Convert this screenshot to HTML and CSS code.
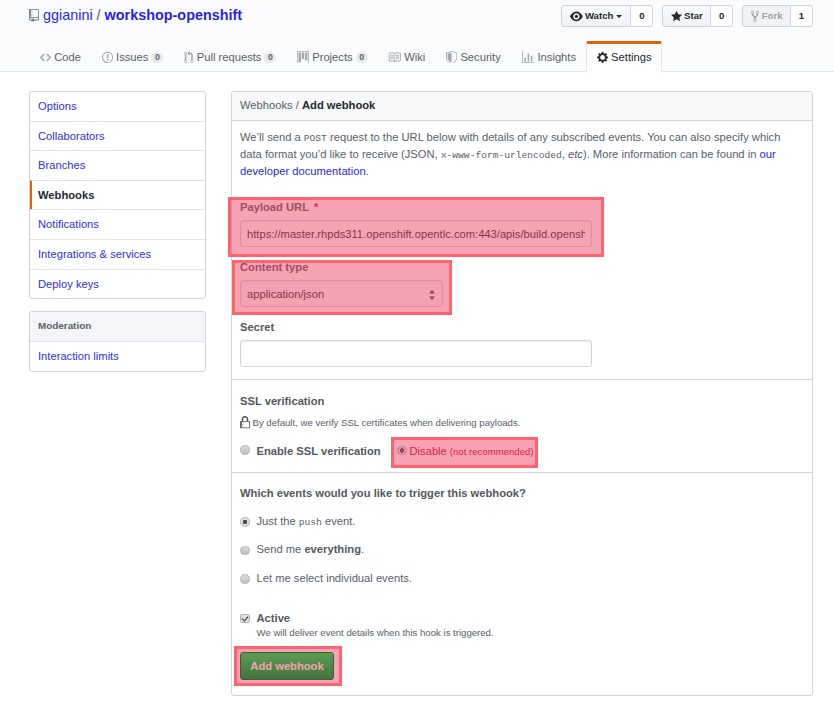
FILE: index.html
```html
<!DOCTYPE html>
<html lang="en">
<head>
<meta charset="utf-8">
<title>Add webhook</title>
<link rel="stylesheet" href="styles.css">
</head>
<body>
<header class="repohead">
  <div class="repohead-top">
    <h1 class="repo-title">
      <svg class="ico repo-ico" viewBox="0 0 12 16"><path d="M4 9H3V8h1v1zm0-3H3v1h1V6zm0-2H3v1h1V4zm0-2H3v1h1V2zm8-1v12c0 .55-.45 1-1 1H6v2l-1.5-1.5L3 16v-2H1c-.55 0-1-.45-1-1V1c0-.55.45-1 1-1h10c.55 0 1 .45 1 1zm-1 10H1v2h2v-1h3v1h5v-2zm0-10H2v9h9V1z"/></svg>
      <a class="owner" href="#">ggianini</a><span class="sep">/</span><a class="name" href="#">workshop-openshift</a>
    </h1>
    <div class="actions">
      <div class="btn-pair">
        <span class="btn-act btn-watch"><svg class="ico act-ico" viewBox="0 0 16 16"><path d="M8.06 2C3 2 0 8 0 8s3 6 8.06 6C13 14 16 8 16 8s-3-6-7.94-6zM8 12c-2.2 0-4-1.78-4-4 0-2.2 1.8-4 4-4 2.22 0 4 1.8 4 4 0 2.22-1.78 4-4 4zm2-4c0 1.11-.89 2-2 2-1.11 0-2-.89-2-2 0-1.11.89-2 2-2 1.11 0 2 .89 2 2z"/></svg>Watch<i class="caret"></i></span><span class="btn-count">0</span>
      </div>
      <div class="btn-pair">
        <span class="btn-act"><svg class="ico star-ico" viewBox="0 0 14 16"><path d="M14 6l-4.9-.64L7 1 4.9 5.36 0 6l3.6 3.26L2.67 14 7 11.67 11.33 14l-.93-4.74L14 6z"/></svg>Star</span><span class="btn-count">0</span>
      </div>
      <div class="btn-pair">
        <span class="btn-act is-disabled"><svg class="ico fork-ico" viewBox="0 0 10 16"><path d="M8 1a1.993 1.993 0 0 0-1 3.72V6L5 8 3 6V4.72A1.993 1.993 0 0 0 2 1a1.993 1.993 0 0 0-1 3.72V6.5l3 3v1.78A1.993 1.993 0 0 0 5 15a1.993 1.993 0 0 0 1-3.72V9.5l3-3V4.72A1.993 1.993 0 0 0 8 1zM2 4.2C1.34 4.2.8 3.65.8 3c0-.65.55-1.2 1.2-1.2.65 0 1.2.55 1.2 1.2 0 .65-.55 1.2-1.2 1.2zm3 10c-.66 0-1.2-.55-1.2-1.2 0-.65.55-1.2 1.2-1.2.65 0 1.2.55 1.2 1.2 0 .65-.55 1.2-1.2 1.2zm3-10c-.66 0-1.2-.55-1.2-1.2 0-.65.55-1.2 1.2-1.2.65 0 1.2.55 1.2 1.2 0 .65-.55 1.2-1.2 1.2z"/></svg>Fork</span><span class="btn-count">1</span>
      </div>
    </div>
  </div>
  <nav class="tabs">
    <a class="tab" href="#"><svg class="ico tab-ico" viewBox="0 0 14 16"><path d="M9.5 3L8 4.5 11.5 8 8 11.5 9.5 13 14 8 9.5 3zm-5 0L0 8l4.5 5L6 11.5 2.5 8 6 4.5 4.5 3z"/></svg>Code</a>
    <a class="tab" href="#"><svg class="ico tab-ico" viewBox="0 0 14 16"><path d="M7 2.3c3.14 0 5.7 2.56 5.7 5.7s-2.56 5.7-5.7 5.7A5.71 5.71 0 0 1 1.3 8c0-3.14 2.56-5.7 5.7-5.7zM7 1C3.14 1 0 4.14 0 8s3.14 7 7 7 7-3.14 7-7-3.14-7-7-7zm1 3H6v5h2V4zm0 6H6v2h2v-2z"/></svg>Issues<span class="counter">0</span></a>
    <a class="tab" href="#"><svg class="ico tab-ico" viewBox="0 0 12 16"><path d="M11 11.28V5c-.03-.78-.34-1.47-.94-2.06C9.46 2.35 8.78 2.03 8 2H7V0L4 3l3 3V4h1c.27.02.48.11.69.31.21.2.3.42.31.69v6.28A1.993 1.993 0 0 0 10 15a1.993 1.993 0 0 0 1-3.72zm-1 2.92c-.66 0-1.2-.55-1.2-1.2 0-.65.55-1.2 1.2-1.2.65 0 1.2.55 1.2 1.2 0 .65-.55 1.2-1.2 1.2zM4 3c0-1.11-.89-2-2-2a1.993 1.993 0 0 0-1 3.72v6.56A1.993 1.993 0 0 0 2 15a1.993 1.993 0 0 0 1-3.72V4.72c.59-.34 1-.98 1-1.72zm-.8 10c0 .66-.55 1.2-1.2 1.2-.65 0-1.2-.55-1.2-1.2 0-.65.55-1.2 1.2-1.2.65 0 1.2.55 1.2 1.2zM2 4.2C1.34 4.2.8 3.65.8 3c0-.65.55-1.2 1.2-1.2.65 0 1.2.55 1.2 1.2 0 .65-.55 1.2-1.2 1.2z"/></svg>Pull requests<span class="counter">0</span></a>
    <a class="tab" href="#"><svg class="ico tab-ico" viewBox="0 0 15 16"><path d="M10 12h3V2h-3v10zm-4-2h3V2H6v8zm-4 4h3V2H2v12zm-1 1h13V1H1v14zM14 0H1a1 1 0 0 0-1 1v14a1 1 0 0 0 1 1h13a1 1 0 0 0 1-1V1a1 1 0 0 0-1-1z"/></svg>Projects<span class="counter">0</span></a>
    <a class="tab" href="#"><svg class="ico tab-ico" viewBox="0 0 16 16"><path d="M3 5h4v1H3V5zm0 3h4V7H3v1zm0 2h4V9H3v1zm11-5h-4v1h4V5zm0 2h-4v1h4V7zm0 2h-4v1h4V9zm2-6v9c0 .55-.45 1-1 1H9.5l-1 1-1-1H2c-.55 0-1-.45-1-1V3c0-.55.45-1 1-1h5.5l1 1 1-1H15c.55 0 1 .45 1 1zm-8 .5L7.5 3H2v9h6V3.5zm7-.5H9.5l-.5.5V12h6V3z"/></svg>Wiki</a>
    <a class="tab" href="#"><svg class="ico tab-ico" viewBox="0 0 14 16"><path d="M0 2l7-2 7 2v6.02C14 12.69 8.69 16 7 16c-1.69 0-7-3.31-7-7.98V2zm1 .75L7 1l6 1.75v5.268C13 12.104 8.449 15 7 15c-1.449 0-6-2.896-6-6.982V2.75zm1 .75L7 2v12c-1.207 0-5-2.482-5-5.985V3.5z"/></svg>Security</a>
    <a class="tab" href="#"><svg class="ico tab-ico" viewBox="0 0 16 16"><path d="M16 14v1H0V0h1v14h15zM5 13H3V8h2v5zm4 0H7V3h2v10zm4 0h-2V6h2v7z"/></svg>Insights</a>
    <a class="tab is-selected" href="#"><svg class="ico tab-ico" viewBox="0 0 14 16"><path d="M14 8.77v-1.6l-1.94-.64-.45-1.09.88-1.84-1.13-1.13-1.81.91-1.09-.45-.69-1.92h-1.6l-.63 1.94-1.11.45-1.84-.88-1.13 1.13.91 1.81-.45 1.09L0 7.23v1.59l1.94.64.45 1.09-.88 1.84 1.13 1.13 1.81-.91 1.09.45.69 1.92h1.59l.63-1.94 1.11-.45 1.84.88 1.13-1.13-.92-1.81.47-1.09L14 8.75v.02zM7 11c-1.66 0-3-1.34-3-3s1.34-3 3-3 3 1.34 3 3-1.34 3-3 3z"/></svg>Settings</a>
  </nav>
</header>

<div class="page">
  <aside class="sidebar">
    <nav class="menu">
      <a class="menu-item" href="#">Options</a>
      <a class="menu-item" href="#">Collaborators</a>
      <a class="menu-item" href="#">Branches</a>
      <a class="menu-item is-current" href="#">Webhooks</a>
      <a class="menu-item" href="#">Notifications</a>
      <a class="menu-item" href="#">Integrations &amp; services</a>
      <a class="menu-item" href="#">Deploy keys</a>
    </nav>
    <nav class="menu">
      <div class="menu-heading">Moderation</div>
      <a class="menu-item" href="#">Interaction limits</a>
    </nav>
  </aside>

  <main class="panel">
    <div class="panel-head"><span class="crumb">Webhooks /</span> <strong>Add webhook</strong></div>
    <div class="panel-body">
      <p class="intro">We’ll send a <code>POST</code> request to the URL below with details of any subscribed events. You can also specify which data format you’d like to receive (JSON, <code>x-www-form-urlencoded</code>, <em>etc</em>). More information can be found in <a href="#">our developer documentation</a>.</p>

      <div class="field field-url">
        <label class="label">Payload URL <span class="req">*</span></label>
        <input class="input input-wide" type="text" value="https://master.rhpds311.openshift.opentlc.com:443/apis/build.openshift.io/v1/namespaces">
        <span class="mark mark-url"></span>
      </div>
      <div class="field field-type">
        <label class="label">Content type</label>
        <div class="select"><span class="select-value">application/json</span><svg class="select-arrows" viewBox="0 0 8 12"><path d="M4 1l3 3.600H1zM4 11L1 7.400h6z"/></svg></div>
        <span class="mark mark-type"></span>
      </div>
      <div class="field field-secret">
        <label class="label">Secret</label>
        <input class="input input-wide" type="text">
      </div>
    </div>

    <section class="ssl">
      <h3 class="sub-title">SSL verification</h3>
      <p class="ssl-note"><svg class="ico lock-ico" viewBox="0 0 12 16"><path d="M4 13H3v-1h1v1zm8-6v7c0 .55-.45 1-1 1H1c-.55 0-1-.45-1-1V7c0-.55.45-1 1-1h1V4c0-2.2 1.8-4 4-4s4 1.8 4 4v2h1c.55 0 1 .45 1 1zM3.8 6h4.41V4c0-1.22-.98-2.2-2.2-2.2-1.22 0-2.2.98-2.2 2.2v2H3.8zM11 7H2v7h9V7zM4 8H3v1h1V8zm0 2H3v1h1v-1z"/></svg>By default, we verify SSL certificates when delivering payloads.</p>
      <div class="ssl-options">
        <label class="ssl-enable"><input class="radio" type="radio" name="ssl">Enable SSL verification</label>
        <label class="ssl-disable"><input class="radio" type="radio" name="ssl" checked>Disable <small>(not recommended)</small><span class="mark mark-ssl"></span></label>
      </div>
    </section>

    <section class="events">
      <h3 class="sub-title">Which events would you like to trigger this webhook?</h3>
      <label class="event"><input class="radio" type="radio" name="ev" checked><span>Just the <code>push</code> event.</span></label>
      <label class="event"><input class="radio" type="radio" name="ev"><span>Send me <b>everything</b>.</span></label>
      <label class="event"><input class="radio" type="radio" name="ev"><span>Let me select individual events.</span></label>

      <div class="active-row">
        <input class="check" type="checkbox" checked>
        <div>
          <div class="active-label">Active</div>
          <div class="active-note">We will deliver event details when this hook is triggered.</div>
        </div>
      </div>
      <div class="submit-row">
        <button class="btn-primary" type="button">Add webhook</button>
        <span class="mark mark-btn"></span>
      </div>
    </section>
  </main>
</div>
</body>
</html>
```

FILE: styles.css
```css
* { box-sizing: border-box; }
html, body { margin: 0; padding: 0; }
body {
  background: #fff;
  color: #24292e;
  font-family: "Liberation Sans", Arial, sans-serif;
  font-size: 11.2px;
  line-height: 1.5;
  height: 725px;
  overflow: hidden;
}
a { color: #2a1fe6; text-decoration: none; }
code { font-family: "Liberation Mono", monospace; font-size: 9.6px; line-height: 0; }
.ico { display: inline-block; fill: currentColor; fill-rule: evenodd; flex: none; }

/* repo header */
.repohead {
  height: 72px;
  background: #fafbfc;
  border-bottom: 1px solid #e1e4e8;
  padding: 0 21px 0 29px;
}
.repohead-top { display: flex; justify-content: space-between; height: 41px; }
.repo-title {
  display: flex;
  align-items: center;
  height: 20px;
  margin: 5px 0 0;
  font-size: 14.4px;
  font-weight: 400;
  line-height: 20px;
  color: #6a737d;
}
.repo-ico { width: 10px; height: 13px; margin-right: 4px; color: #6a737d; }
.sep { margin: 0 4px; color: #586069; }
.name { font-weight: 700; }

.actions { display: flex; gap: 9px; margin-top: 5px; }
.btn-pair { display: flex; height: 22px; font-size: 9.6px; font-weight: 700; line-height: 20px; }
.btn-act {
  display: flex;
  align-items: center;
  padding: 0 7.500px;
  color: #24292e;
  background: linear-gradient(#f9fafb, #eff3f6);
  border: 1px solid #ced2d6;
  border-radius: 3px 0 0 3px;
}
.btn-watch { padding: 0 8px; }
.btn-count {
  width: 22px;
  text-align: center;
  color: #24292e;
  background: #fff;
  border: 1px solid #d1d5da;
  border-left: 0;
  border-radius: 0 3px 3px 0;
}
.act-ico { width: 12.800px; height: 12.800px; margin-right: 2px; }
.star-ico { width: 11.200px; height: 12.800px; margin-right: 2px; }
.fork-ico { width: 8px; height: 12.800px; margin-right: 3px; }
.caret {
  width: 0; height: 0;
  margin-left: 3px;
  border: 3.500px solid transparent;
  border-top-color: #24292e;
  border-bottom: 0;
}
.is-disabled { color: #9aa0a7; background: #eff3f6; }

.tabs { display: flex; height: 31px; padding-left: .5px; }
.tab {
  display: flex;
  align-items: center;
  height: 31px;
  padding: 0 9.350px;
  color: #586069;
  white-space: nowrap;
  border: 1px solid transparent;
  border-top-width: 2px;
}
.tab-ico { width: auto; height: 12.800px; margin-right: 3.200px; color: #a3aab1; }
.counter {
  margin-left: 3px;
  padding: 0 3.500px;
  font-size: 8.800px;
  font-weight: 700;
  line-height: 11px;
  color: #586069;
  background: rgba(27, 31, 35, .08);
  border-radius: 8px;
}
.is-selected {
  height: 32px;
  margin-bottom: -1px;
  padding-bottom: 1px;
  color: #24292e;
  background: #fff;
  border-color: #e36209 #e1e4e8 #fff;
  border-top-width: 3px;
  border-radius: 2px 2px 0 0;
}
.is-selected .tab-ico { color: #24292e; }

/* page */
.page { display: flex; gap: 25px; align-items: flex-start; padding: 19px 21px 0 29px; }
.sidebar { display: flex; flex-direction: column; gap: 12px; width: 177px; flex: none; }
.menu { background: #fff; border: 1px solid #d1d5da; border-radius: 3px; overflow: hidden; }
.menu-item {
  display: block;
  height: 29.600px;
  padding: 6px 8px 0;
  color: #2f2fe0;
  line-height: 17px;
  border-top: 1px solid #e1e4e8;
}
.menu-item:first-child { border-top: 0; height: 28.600px; }
.is-current {
  padding-left: 6px;
  color: #24292e;
  font-weight: 700;
  border-left: 2px solid #e36209;
}
.menu-heading {
  height: 29px;
  padding: 0 8px;
  font-size: 9.900px;
  font-weight: 700;
  line-height: 27px;
  color: #586069;
  background: #f3f5f8;
}

.panel {
  position: relative;
  width: 582px;
  height: 605px;
  border: 1px solid #d1d5da;
  border-radius: 3px;
}
.panel-head {
  height: 29px;
  padding: 0 8px;
  line-height: 26px;
  color: #586069;
  background: #f6f8fa;
  border-bottom: 1px solid #d1d5da;
}
.panel-head strong { color: #24292e; }
.panel-body { padding: 8px 8px 0; }
.intro { margin: 0; line-height: 17px; color: #586069; }
.label { display: block; font-weight: 700; line-height: 17px; color: #53585d; }
.req { margin-left: 2px; color: #cb2431; }
.field { position: relative; }
.field-url { margin-top: 19px; }
.field-type { margin-top: 12px; }
.field-secret { margin-top: 12px; }
.input, .select {
  display: block;
  height: 27px;
  margin-top: 4px;
  padding: 0 6px;
  font: inherit;
  line-height: 25px;
  color: #24292e;
  background: #fff;
  border: 1px solid #d1d5da;
  border-radius: 3px;
  box-shadow: inset 0 1px 2px rgba(27, 31, 35, .075);
  outline: 0;
}
.input-wide { width: 352px; }
.select {
  display: flex;
  align-items: center;
  justify-content: space-between;
  width: 203px;
  background: #fafbfc;
}
.select-value { padding-top: 1px; }
.select-arrows { width: 8px; height: 12px; margin-top: 2px; fill: #444d56; }

/* overlay highlights */
.mark {
  position: absolute;
  pointer-events: none;
  background: rgba(238, 62, 98, .48);
  background-clip: padding-box;
  border: 3px solid rgba(255, 60, 75, .8);
}
.mark-url { left: -12px; top: -2px; width: 376px; height: 60px; }
.mark-type { left: -8px; top: 1px; width: 220px; height: 55px; }
.mark-ssl { left: -6px; top: -6px; width: 147px; height: 31px; }
.mark-btn { left: -6px; top: -6px; width: 108px; height: 40px; }

.ssl { height: 93px; margin-top: 12px; padding: 13px 8px 0; border-top: 1px solid #d1d5da; }
.sub-title { margin: 0; font-size: 11.2px; font-weight: 700; line-height: 17px; color: #53585d; }
.ssl-note {
  display: flex;
  align-items: flex-end;
  height: 16px;
  margin: 4px 0 0;
  font-size: 9.600px;
  line-height: 14px;
  color: #586069;
}
.lock-ico { width: 10px; height: 13px; margin: 0 2.500px 1px 0; color: #4d5257; }
.ssl-options { display: flex; margin-top: 13px; height: 17px; line-height: 17px; }
.ssl-enable { display: flex; align-items: center; font-weight: 700; color: #53585d; width: 157px; }
.ssl-enable .radio { margin-right: 7px; margin-top: -3px; }
.ssl-disable { position: relative; display: flex; align-items: center; color: #c80010; white-space: nowrap; }
.ssl-disable .radio { margin-right: 3px; margin-top: -2px; }
.ssl-disable small { margin-left: 3px; font-size: 9.600px; }

.radio, .check {
  appearance: none;
  flex: none;
  width: 9.500px;
  height: 9.500px;
  margin: 0 7px 0 0;
  background: linear-gradient(#dcdcdc, #bdbdbd);
  border: 1px solid #b0b0b0;
  border-radius: 50%;
}
.radio:checked { background: radial-gradient(circle, #4a4a4a 0 2px, #e0e0e0 2.500px); }

.events { padding: 12px 8px 0; border-top: 1px solid #d1d5da; }
.events .sub-title { margin-bottom: 5px; }
.event {
  display: flex;
  align-items: center;
  height: 28.500px;
  color: #586069;
}
.event b { color: #53585d; }
.event .radio { margin-right: 7px; margin-top: 1px; }
.active-row { display: flex; margin-top: 16px; }
.check {
  position: relative;
  margin: 5px 7px 0 0;
  border-radius: 2px;
  background: #dedede;
}
.check:checked::after {
  content: "";
  position: absolute;
  left: 2px;
  top: 0;
  width: 3px;
  height: 5px;
  border: solid #333;
  border-width: 0 1.500px 1.500px 0;
  transform: rotate(40deg);
}
.active-label { font-weight: 700; line-height: 15px; color: #53585d; margin-top: 2px; }
.active-note { font-size: 9.600px; line-height: 14px; color: #586069; }
.submit-row { position: relative; margin-top: 12.500px; }
.btn-primary {
  position: relative;
  z-index: 1;
  display: block;
  width: 94px;
  height: 28px;
  padding: 0;
  font: inherit;
  font-weight: 700;
  color: #f3a3ae;
  background: linear-gradient(#5c9c52, #44733f);
  border: 1px solid #3c5c3c;
  border-radius: 3px;
}
```
